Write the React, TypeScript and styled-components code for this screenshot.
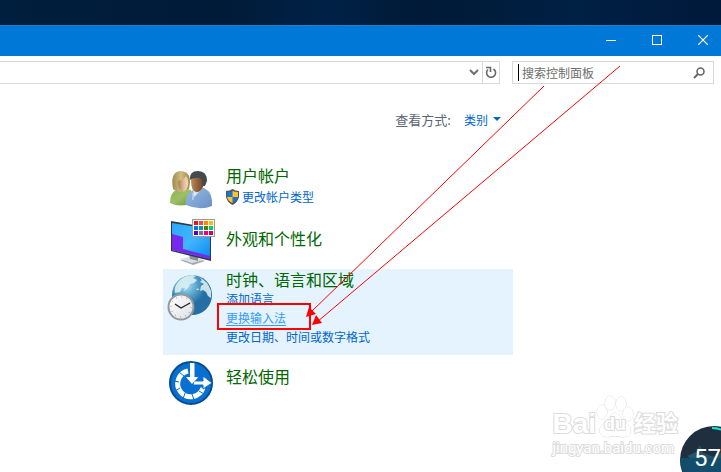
import React from "react";
import styled, { createGlobalStyle } from "styled-components";

const Global = createGlobalStyle`
  * { box-sizing: border-box; }
  body { margin: 0; background: #fff; font-family: "Noto Sans CJK SC", "Liberation Sans", sans-serif; }
  button, input { font-family: inherit; }
  svg { display: block; flex: none; }
`;

const Page = styled.div`
  position: relative;
  min-height: 100vh;
  overflow: hidden;
`;
const Desktop = styled.div`
  height: 25px;
  background: linear-gradient(90deg, #001e3d 0%, #001b38 30%, #002146 46%, #001a36 58%, #002044 80%, #00193a 100%);
`;
const TitleBar = styled.header`
  display: flex;
  justify-content: flex-end;
  gap: 10px;
  height: 31px;
  padding-bottom: 2px;
  background: #0078d7;
  border-top: 1px solid #1c80d0;
`;
const WindowButton = styled.button`
  display: grid;
  place-items: center;
  width: 36px;
  padding: 0;
  border: 0;
  background: none;
`;
const ToolRow = styled.div`
  display: flex;
  gap: 12px;
  padding: 5px 7px 0 0;
`;
const AddressBar = styled.div`
  flex: 1;
  display: flex;
  justify-content: flex-end;
  height: 23px;
  border: 1px solid #d9d9d9;
  border-left: 0;
`;
const BarButton = styled.button<{ $divided?: boolean }>`
  display: grid;
  place-items: center;
  width: ${(p) => (p.$divided ? 17 : 16)}px;
  padding: 0;
  border: 0;
  border-left: ${(p) => (p.$divided ? "1px solid #d9d9d9" : "0")};
  background: none;
`;
const SearchBox = styled.label`
  display: flex;
  align-items: center;
  width: 202px;
  height: 23px;
  padding: 0 8px 0 5px;
  border: 1px solid #d9d9d9;
`;
const Caret = styled.span`
  width: 1px;
  height: 17px;
  margin-right: 3px;
  background: #000;
`;
const SearchInput = styled.input`
  flex: 1;
  min-width: 0;
  height: 20px;
  padding: 0;
  border: 0;
  outline: 0;
  background: none;
  font-size: 12px;
  &::placeholder { color: #6d6d6d; opacity: 1; }
`;
const Content = styled.main`
  max-width: 513px;
  padding: 24px 0 0 163px;
`;
const ViewRow = styled.div`
  display: flex;
  justify-content: flex-end;
  align-items: center;
  gap: 13px;
  height: 22px;
  padding-right: 12px;
  font-size: 13px;
  color: #5c6474;
`;
const ViewButton = styled.button`
  display: flex;
  align-items: center;
  gap: 5px;
  padding: 0;
  border: 0;
  background: none;
  color: #0066cc;
  font-size: 12px;
`;
const CategoryList = styled.div`
  display: flex;
  flex-direction: column;
  padding-top: 35px;
`;
const Category = styled.section<{ $active?: boolean }>`
  display: flex;
  gap: 12px;
  min-height: 52px;
  padding: 0 3px ${(p) => (p.$active ? 9 : 0)}px;
  background: ${(p) => (p.$active ? "#e5f3ff" : "transparent")};
`;
const IconSlot = styled.div`
  flex: none;
  width: 48px;
`;
const Links = styled.div<{ $single?: boolean; $spaced?: boolean }>`
  display: flex;
  flex-direction: column;
  align-items: flex-start;
  gap: ${(p) => (p.$spaced ? 2 : 0)}px;
  padding-top: ${(p) => (p.$single ? 11 : 0)}px;
`;
const Title = styled.a`
  color: #006600;
  font-size: 16px;
  line-height: 20px;
  text-decoration: none;
`;
const TaskLink = styled.a<{ $hover?: boolean }>`
  display: flex;
  align-items: center;
  gap: 3px;
  height: 19px;
  font-size: 12px;
  line-height: 19px;
  color: ${(p) => (p.$hover ? "#3399ff" : "#0066cc")};
  text-decoration: ${(p) => (p.$hover ? "underline" : "none")};
  text-underline-offset: 2px;
`;
const Annotation = styled.svg`
  position: absolute;
  top: 0;
  left: 0;
  pointer-events: none;
`;
const Watermark = styled.div`
  position: absolute;
  right: 43px;
  bottom: 14px;
  display: flex;
  flex-direction: column;
  color: #fff;
  -webkit-text-stroke: 2px #dcdcdc;
  paint-order: stroke fill;
`;
const Brand = styled.div`
  display: flex;
  align-items: flex-end;
  height: 44px;
  font-family: "Liberation Sans", "Noto Sans CJK SC", sans-serif;
  font-weight: 700;
  font-size: 28px;
  line-height: 28px;
`;
const Paw = styled.div`
  display: grid;
  width: 38px;
  > * { grid-area: 1 / 1; }
`;
const PawText = styled.span`
  align-self: end;
  justify-self: center;
  font-size: 18px;
  line-height: 28px;
`;
const BrandName = styled.span`
  font-size: 22px;
  line-height: 28px;
`;
const Domain = styled.div`
  font-family: Roboto, sans-serif;
  font-size: 15px;
  line-height: 20px;
`;
const Bubble = styled.div`
  position: absolute;
  right: -27px;
  bottom: -22px;
  display: grid;
  width: 68px;
  height: 68px;
  > * { grid-area: 1 / 1; }
`;
const Score = styled.span`
  padding: 16px 0 0 14px;
  font: 24px/32px Roboto, sans-serif;
  color: #fff;
`;

const Users = () => (
  <svg width="48" height="52" viewBox="0 0 48 52">
    <defs>
      <linearGradient id="face" x1="0" x2="1"><stop stopColor="#a57c55" /><stop offset=".6" stopColor="#e6bf9b" /><stop offset="1" stopColor="#f3d9bd" /></linearGradient>
      <linearGradient id="face2" x1="0" x2="1"><stop stopColor="#b98a60" /><stop offset=".5" stopColor="#94633c" /><stop offset="1" stopColor="#6f4426" /></linearGradient>
      <linearGradient id="hair" x1="0" x2="1"><stop stopColor="#a08b4c" /><stop offset=".5" stopColor="#d0bd80" /><stop offset="1" stopColor="#9c8648" /></linearGradient>
      <linearGradient id="green" x2="1" y2="1"><stop stopColor="#8db256" /><stop offset=".5" stopColor="#9cc062" /><stop offset="1" stopColor="#6b9440" /></linearGradient>
      <linearGradient id="shirt" x2="1" y2="1"><stop stopColor="#9bbbe0" /><stop offset=".5" stopColor="#80a6d5" /><stop offset="1" stopColor="#6690c6" /></linearGradient>
    </defs>
    <path d="M4 38Q4 28 10 25L17 23L25 25L27 38Q14 43 4 38Z" fill="url(#green)" />
    <path d="M7 24Q4 7 14 6Q24 6 24 17L23 24L12 27Z" fill="url(#hair)" />
    <path d="M12 16Q18 15 20 11Q23 15 22 20Q21 26 17 27Q12 25 12 16Z" fill="url(#face)" />
    <path d="M20 40Q19 31 24 27L30 23H38Q47 27 46 41Q34 46 20 40Z" fill="url(#shirt)" />
    <path d="M27 24L32 26L35 25L28 32Z" fill="#dce8f6" />
    <path d="M25 15Q26 10 34 11L38 17L37 22Q34 28 30 27Q25 26 25 15Z" fill="url(#face2)" />
    <path d="M24 15Q23 6 32 6Q41 6 41 16L39 21L37 21L36 15Q34 12 30 13Q26 13 24 15Z" fill="#454a4e" />
    <path d="M27 28V35" stroke="#d6e5f8" />
  </svg>
);

const swatches = ["#e81123", "#ff4343", "#ff8c00", "#ffb900", "#0078d7", "#0099bc", "#498205", "#00cc6a", "#4f00c8", "#8764b8", "#e3008c", "#d9005b"];
const Monitor = () => (
  <svg width="52" height="52" viewBox="0 0 52 52">
    <defs><linearGradient id="screen" x2="1" y2="1"><stop stopColor="#27a9ff" /><stop offset=".5" stopColor="#41b5ff" /><stop offset="1" stopColor="#0789ee" /></linearGradient></defs>
    <path d="M14 43L27 40L39 44L27 48Z" fill="#a2a8ae" /><path d="M14 42L27 39L38 43L26 46Z" fill="#dce0e4" />
    <path d="M23 37L32 40V44L24 42Z" fill="#8c9299" />
    <path d="M5 4L45 11V44L5 34Z" fill="#303740" />
    <path d="M6 6L44 12V42L6 33Z" fill="url(#screen)" />
    <path d="M6 17L17 20V32L44 39V42L6 33Z" fill="#7729ee" />
    <rect x="26.500" y="2.500" width="22" height="17" fill="#fff" stroke="#999" />
    {swatches.map((c, i) => <rect key={i} x={28 + (i % 4) * 5} y={4 + Math.floor(i / 4) * 5} width="4" height="4" fill={c} />)}
  </svg>
);

const GlobeClock = () => (
  <svg width="48" height="54" viewBox="0 0 48 54">
    <defs>
      <radialGradient id="sea" cx=".35" cy=".25"><stop stopColor="#bce7f5" /><stop offset=".4" stopColor="#6db5d8" /><stop offset="1" stopColor="#2470a4" /></radialGradient>
      <linearGradient id="dial" x2="1" y2="1"><stop stopColor="#fff" /><stop offset="1" stopColor="#dddfe3" /></linearGradient>
    </defs>
    <circle cx="26" cy="26" r="20" fill="url(#sea)" />
    <path d="M10 16Q15 7 26 6L30 7L27 9L31 11L28 14L24 15L22 19L18 22L19 19L16 19L14 23L9 24Q8 19 10 16ZM33 8Q42 12 45 22L45 29L42 27L40 23L37 21L34 22L35 17L38 15L34 13L36 11ZM32 19L30 21L33 21Z" fill="#d8eef2" opacity=".9" />
    <circle cx="15" cy="38" r="12.500" fill="url(#dial)" stroke="#94989d" strokeWidth="2" />
    <circle cx="15" cy="38" r="10" fill="none" stroke="#8e9298" strokeWidth="1" strokeDasharray="1 4.236" />
    <path d="M9 35L15 39L24 34" fill="none" stroke="#202429" strokeWidth="1.400" />
  </svg>
);

const Ease = () => (
  <svg width="48" height="52" viewBox="0 0 48 52">
    <circle cx="25" cy="28" r="21" fill="#0870d0" stroke="#064c91" strokeWidth="2" />
    <path d="M22 16A13 13 0 1 0 37 33" fill="none" stroke="#fff" strokeWidth="5" />
    <path d="M13 17L18 21M8 26L13 27M9 36L14 33M17 44L19 38M28 45L26 39M38 39L33 36" stroke="#0870d0" />
    <path d="M24 8H29V22H33L27 29L20 22H24Z" fill="#fff" stroke="#0870d0" />
    <path d="M28 26H37V21L46 28L37 34V30H27Z" fill="#fff" stroke="#0870d0" strokeWidth="1" />
    <path d="M24 8H28V22H32L26 29L20 22H24Z" fill="#fff" />
  </svg>
);

const Shield = () => (
  <svg width="13" height="16" viewBox="0 0 13 16">
    <path d="M6.500 0Q9 2 13 2V8Q12 13 6.500 16Q1 13 0 8V2Q4 2 6.500 0Z" fill="#50565c" />
    <path d="M6.500 2V8H1V3Q4 3 6.500 2ZM6.500 8H12Q11 12 6.500 14Z" fill="#1677d2" />
    <path d="M6.500 2Q9 3 12 3V8H6.500ZM1 8H6.500V14Q2 12 1 8Z" fill="#ffc12e" />
  </svg>
);

export default function App() {
  return (
    <Page>
      <Global />
      <Desktop />
      <TitleBar>
        <WindowButton aria-label="最小化"><svg width="10" height="10"><path d="M0 5.500H10" stroke="#fff" /></svg></WindowButton>
        <WindowButton aria-label="最大化"><svg width="10" height="10"><rect x=".5" y=".5" width="9" height="9" fill="none" stroke="#fff" /></svg></WindowButton>
        <WindowButton aria-label="关闭"><svg width="10" height="10"><path d="M0 0L10 10M10 0L0 10" stroke="#fff" strokeWidth="1.200" /></svg></WindowButton>
      </TitleBar>
      <ToolRow>
        <AddressBar>
          <BarButton aria-label="展开"><svg width="10" height="7"><path d="M1 1L5 5L9 1" fill="none" stroke="#707070" strokeWidth="2" /></svg></BarButton>
          <BarButton $divided aria-label="刷新">
            <svg width="12" height="13" viewBox="0 0 12 13"><path d="M8.500 3A4.500 4.500 0 1 1 3 3.500" fill="none" stroke="#686868" strokeWidth="1.600" /><path d="M1 1.500H5.500V6" fill="none" stroke="#686868" strokeWidth="1.600" /></svg>
          </BarButton>
        </AddressBar>
        <SearchBox>
          <Caret />
          <SearchInput aria-label="搜索控制面板" placeholder="搜索控制面板" />
          <svg width="12" height="12"><circle cx="7.500" cy="4.500" r="3.500" fill="none" stroke="#686868" strokeWidth="1.600" /><path d="M5 7L1 11" stroke="#686868" strokeWidth="2" /></svg>
        </SearchBox>
      </ToolRow>
      <Content>
        <ViewRow>
          <span>查看方式:</span>
          <ViewButton>类别<svg width="8" height="4"><path d="M0 0H8L4 4Z" fill="#0066cc" /></svg></ViewButton>
        </ViewRow>
        <CategoryList>
          <Category>
            <IconSlot><Users /></IconSlot>
            <Links $spaced><Title href="#users">用户帐户</Title><TaskLink href="#type"><Shield />更改帐户类型</TaskLink></Links>
          </Category>
          <Category>
            <IconSlot><Monitor /></IconSlot>
            <Links $single><Title href="#appearance">外观和个性化</Title></Links>
          </Category>
          <Category $active>
            <IconSlot><GlobeClock /></IconSlot>
            <Links>
              <Title href="#clock">时钟、语言和区域</Title>
              <TaskLink href="#add">添加语言</TaskLink>
              <TaskLink href="#input" $hover>更换输入法</TaskLink>
              <TaskLink href="#format">更改日期、时间或数字格式</TaskLink>
            </Links>
          </Category>
          <Category>
            <IconSlot><Ease /></IconSlot>
            <Links $single><Title href="#ease">轻松使用</Title></Links>
          </Category>
        </CategoryList>
      </Content>
      <Annotation width="640" height="350" viewBox="0 0 640 350">
        <rect x="218" y="304" width="92" height="25" fill="none" stroke="#f00" strokeWidth="2" />
        <path d="M544 86L310 313M620 66L317 322" stroke="#f00" fill="none" />
        <path d="M306 317L309 307L316 314ZM312 325L316 315L322 323Z" fill="#f00" />
      </Annotation>
      <Watermark>
        <Brand>
          Bai
          <Paw>
            <svg width="38" height="44" viewBox="0 0 38 44" fill="#fff" stroke="#dcdcdc">
              <ellipse cx="6" cy="18" rx="5" ry="7" /><ellipse cx="14" cy="9" rx="5" ry="7" /><ellipse cx="25" cy="10" rx="5" ry="7" /><ellipse cx="32" cy="20" rx="5" ry="7" />
              <path d="M19 19Q23 19 26 25L34 33Q37 43 27 43Q19 41 12 43Q2 43 4 34L12 25Q15 19 19 19Z" />
            </svg>
            <PawText>du</PawText>
          </Paw>
          <BrandName>经验</BrandName>
        </Brand>
        <Domain>jingyan.baidu.com</Domain>
      </Watermark>
      <Bubble>
        <svg width="68" height="68" viewBox="0 0 68 68">
          <circle cx="34" cy="34" r="34" fill="#202f40" />
          <path d="M0 32H68A34 34 0 0 1 0 32Z" fill="#124d6b" />
          <path d="M7 30L16 26L20 19L23 27L34 31L45 24L47 32H10Z" fill="#235468" />
          <path d="M32 2Q38 2 45 5" fill="none" stroke="#1de0d0" strokeWidth="2" />
        </svg>
        <Score>57</Score>
      </Bubble>
    </Page>
  );
}
